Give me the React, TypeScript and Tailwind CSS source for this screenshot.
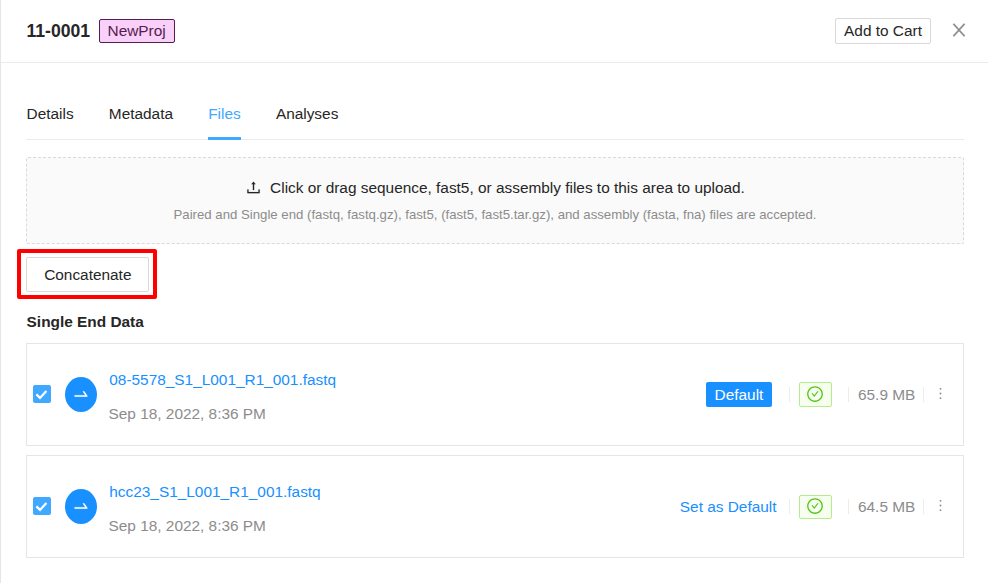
import React from "react";
import {
  AiOutlineCheckCircle,
  AiOutlineClose,
  AiOutlineMore,
  AiOutlineSwapRight,
  AiOutlineUpload,
} from "react-icons/ai";

type SeqFile = { name: string; date: string; size: string; isDefault: boolean };

const files: SeqFile[] = [
  { name: "08-5578_S1_L001_R1_001.fastq", date: "Sep 18, 2022, 8:36 PM", size: "65.9 MB", isDefault: true },
  { name: "hcc23_S1_L001_R1_001.fastq", date: "Sep 18, 2022, 8:36 PM", size: "64.5 MB", isDefault: false },
];

function Header() {
  return (
    <header className="flex h-[63px] items-center border-b border-[#ebebeb] pl-[25.5px] pr-[20px]">
      <h1 className="text-[17.6px] font-bold leading-6 text-[#262626]">11-0001</h1>
      <span className="ml-[8.5px] flex h-6 w-[76px] items-center justify-center rounded-[2px] border border-[#531c53] bg-[#f9d0f7] text-[15.4px] text-[#531c53]">
        NewProj
      </span>
      <button className="ml-auto flex h-[26px] w-24 items-center justify-center rounded-[2px] border border-[#d9d9d9] text-[15.4px]">
        Add to Cart
      </button>
      <AiOutlineClose className="mb-[3px] ml-[19px] h-5 w-[18px] text-[#8c8c8c]" stroke="currentColor" strokeWidth={8} preserveAspectRatio="none" />
    </header>
  );
}

function Tabs() {
  return (
    <nav className="mt-[26px] flex h-[51px] gap-[35.2px] border-b border-[#ebebeb] pl-[0.6px]">
      <a className="pt-[13px]">Details</a>
      <a className="pt-[13px]">Metadata</a>
      <a className="-mb-px border-b-[3px] border-[#40a9ff] pt-[13px] text-[#40a9ff]">Files</a>
      <a className="pt-[13px]">Analyses</a>
    </nav>
  );
}

function Divider({ className }: { className: string }) {
  return <span className={`h-[15px] w-px bg-[#ececec] ${className}`} />;
}

function FileRow({ file }: { file: SeqFile }) {
  return (
    <li className="flex h-[103px] items-center border border-[#e6e6e6] pl-1.5 pr-[14px]">
      <span className="mb-0.5 flex size-[18px] items-center justify-center rounded-[2px] bg-[#40a9ff]">
        <svg viewBox="0 0 18 18" className="size-[18px]" fill="none" stroke="white" strokeWidth="2.2">
          <path d="M3.4 9.4 7 12.9 13.4 5.9" />
        </svg>
      </span>
      <span className="ml-3.5 flex h-[35px] w-8 items-center justify-center rounded-[50%] bg-[#1890ff] text-white">
        <AiOutlineSwapRight className="mb-px h-5 w-[18px]" preserveAspectRatio="none" stroke="currentColor" strokeWidth={8} />
      </span>
      <div className="ml-3 flex flex-col gap-2.5 pt-1">
        <a className="pl-[0.3px] leading-6 text-[#1890ff]">{file.name}</a>
        <span className="-ml-[0.5px] leading-6 text-[#8c8c8c]">{file.date}</span>
      </div>
      <div className="ml-auto flex items-center">
        {file.isDefault ? (
          <span className="mr-[17px] flex h-[25px] w-[66px] items-center justify-center rounded-[2px] bg-[#1890ff] text-white">
            Default
          </span>
        ) : (
          <a className="mr-[12.5px] text-[#1890ff]">Set as Default</a>
        )}
        <Divider className="mr-[9px]" />
        <span
          className={`flex w-[33px] justify-center rounded-[2px] border border-[#b7eb8f] bg-[#f6ffed] text-[#52c41a] ${
            file.isDefault ? "h-[25px] pt-0.5" : "mt-px h-6 pt-px"
          }`}
        >
          <AiOutlineCheckCircle className="-ml-px size-[18px]" />
        </span>
        <Divider className="ml-4 mr-[9px]" />
        <span className="w-[58px] text-[#8c8c8c]">{file.size}</span>
        <Divider className="ml-[7px] mr-[8px]" />
        <AiOutlineMore className="mb-[3px] size-[17px] text-[#8c8c8c]" />
      </div>
    </li>
  );
}

export default function App() {
  return (
    <div className="h-[583px] w-[988px] overflow-hidden border-l border-[#e6e6e6] bg-white font-['Liberation_Sans',Arial,sans-serif] text-[15.4px] leading-6 text-[#262626]">
      <Header />
      <main className="pl-[25px] pr-6">
        <Tabs />
        <section className="mt-[17px] flex h-[87px] flex-col items-center rounded-[2px] border border-dashed border-[#d9d9d9] bg-[#fafafa] pt-[18px]">
          <p className="flex items-center whitespace-nowrap">
            <AiOutlineUpload className="mb-0.5 mr-2 h-[17px] w-[17px]" stroke="currentColor" strokeWidth={8} />
            Click or drag sequence, fast5, or assembly files to this area to upload.
          </p>
          <p className="mt-[3px] whitespace-nowrap text-[13.2px] text-[#8c8c8c]">
            Paired and Single end (fastq, fastq.gz), fast5, (fast5, fast5.tar.gz), and assembly (fasta, fna) files are accepted.
          </p>
        </section>
        <div className="-ml-[9px] mt-[5px] h-[50px] w-[140px] rounded-[2px] border-4 border-[#ff0000] pl-[5px] pt-1">
          <button className="h-[35px] w-[123px] rounded-[2px] border border-[#d9d9d9] pl-[0.6px]">Concatenate</button>
        </div>
        <h2 className="mt-[11px] pl-[0.6px] font-bold">Single End Data</h2>
        <ul className="mt-[9px] flex flex-col gap-[9px]">
          {files.map((file) => (
            <FileRow key={file.name} file={file} />
          ))}
        </ul>
      </main>
    </div>
  );
}
